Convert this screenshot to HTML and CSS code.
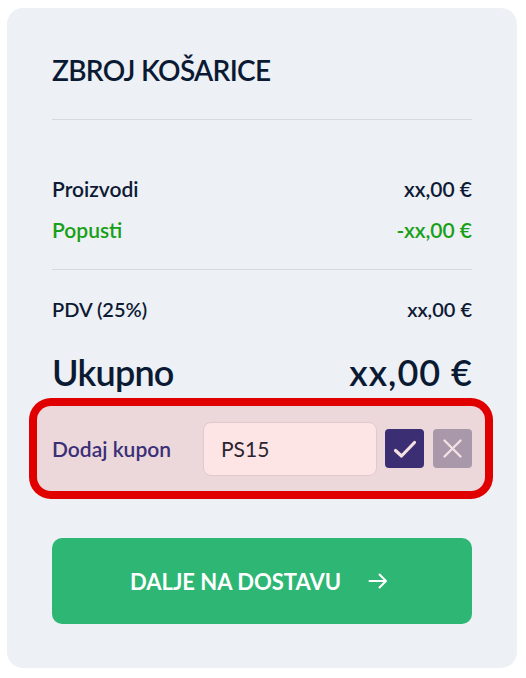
FILE: index.html
```
<!DOCTYPE html>
<html lang="hr">
<head>
<meta charset="utf-8">
<title>Zbroj košarice</title>
<link rel="stylesheet" href="styles.css">
</head>
<body>
<section class="card">
  <h2 class="title">ZBROJ KOŠARICE</h2>
  <hr class="divider divider-top">
  <div class="rows">
    <div class="row"><span>Proizvodi</span><span>xx,00 €</span></div>
    <div class="row row-discount"><span>Popusti</span><span>-xx,00 €</span></div>
  </div>
  <hr class="divider">
  <div class="row row-tax"><span>PDV (25%)</span><span>xx,00 €</span></div>
  <div class="total"><span class="total-label">Ukupno</span><span class="total-value">xx,00 €</span></div>
  <div class="coupon">
    <label class="coupon-label" for="coupon">Dodaj kupon</label>
    <input class="coupon-input" id="coupon" type="text" value="PS15">
    <button class="icon-btn icon-btn-ok" type="button" aria-label="Primijeni">
      <svg viewBox="0 0 39 39" width="39" height="39"><path d="M10.5 21.5L16.5 27L29.5 13.5" fill="none" stroke="#f6e1e2" stroke-width="3.2" stroke-linecap="round" stroke-linejoin="round"/></svg>
    </button>
    <button class="icon-btn icon-btn-clear" type="button" aria-label="Ukloni">
      <svg viewBox="0 0 39 39" width="39" height="39"><path d="M11.5 11.5L27.5 27.5M27.5 11.5L11.5 27.5" fill="none" stroke="#f3e1e3" stroke-width="2.4" stroke-linecap="round"/></svg>
    </button>
  </div>
  <button class="cta" type="button">
    <span>DALJE NA DOSTAVU</span>
    <svg viewBox="0 0 20 20" width="20" height="20"><path d="M1.5 10H18M11.5 3.5L18 10L11.5 16.5" fill="none" stroke="#ffffff" stroke-width="2" stroke-linecap="round" stroke-linejoin="round"/></svg>
  </button>
</section>
</body>
</html>
```
FILE: styles.css
```
* { box-sizing: border-box; }
html, body { margin: 0; padding: 0; background: #ffffff; }
body {
  padding: 8px 9px 10px 7px;
  font-family: Lato, "Noto Sans", sans-serif;
  color: #0c1a33;
}
.card {
  background: #edf0f5;
  border-radius: 16px;
  padding: 44px 45px 44px;
  display: flex;
  flex-direction: column;
}
.title {
  margin: 0;
  font-size: 28px;
  line-height: 36px;
  font-weight: 600;
  letter-spacing: -0.7px;
  color: #0b1a33;
}
.divider {
  margin: 0;
  border: 0;
  height: 1px;
  background: #d6d9de;
}
.divider-top { margin-top: 31px; margin-bottom: 48px; }
.rows { margin-bottom: 19px; }
.row {
  display: flex;
  justify-content: space-between;
  font-size: 21px;
  line-height: 41px;
  font-weight: 600;
  color: #0e1a34;
}
.row-discount { color: #17a015; }
.row-tax { margin-top: 19px; font-size: 20px; }
.total {
  margin-top: 20px;
  display: flex;
  justify-content: space-between;
  font-size: 36px;
  line-height: 44px;
  font-weight: 600;
  color: #0b1a33;
}
.total-label { letter-spacing: -0.8px; }
.total-value { letter-spacing: 1px; margin-right: -1px; }
.coupon {
  margin: 12px -13px 0 -15px;
  height: 85px;
  padding: 0 13px 0 15px;
  display: flex;
  align-items: center;
  gap: 8px;
  background: #ecd8da;
  border-radius: 14px;
  box-shadow: 0 0 0 8px #e00000;
}
.coupon-label {
  flex: 1;
  font-size: 21px;
  font-weight: 600;
  color: #3b2f78;
}
.coupon-input {
  width: 174px;
  height: 54px;
  padding: 0 17px;
  border: 1px solid #e2c9cb;
  border-radius: 8px;
  background: #fde5e5;
  font-family: Lato, "Noto Sans", sans-serif;
  font-size: 21px;
  color: #2c2430;
  outline: none;
}
.icon-btn {
  width: 39px;
  height: 39px;
  padding: 0;
  border: 0;
  border-radius: 4px;
  display: flex;
  align-items: center;
  justify-content: center;
}
.icon-btn-ok { background: #3b2e72; }
.icon-btn-clear { background: #a898a9; margin-left: 1px; }
.cta {
  margin-top: 47px;
  height: 86px;
  border: 0;
  border-radius: 10px;
  background: #2db674;
  color: #ffffff;
  display: flex;
  align-items: center;
  justify-content: center;
  gap: 27px;
  font-family: Lato, "Noto Sans", sans-serif;
  font-size: 22px;
  font-weight: 700;
  padding: 0;
}
.cta span { margin-left: -6px; }
```
